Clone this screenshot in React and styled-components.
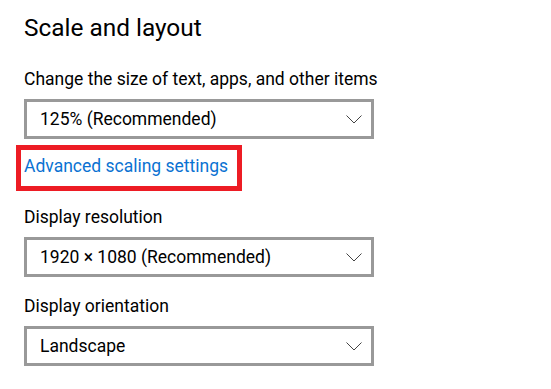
import React from "react";
import styled, { createGlobalStyle } from "styled-components";

const Global = createGlobalStyle`
  html, body { margin: 0; padding: 0; background: #ffffff; }
  body { font-family: Roboto, "Noto Sans", sans-serif; color: #000; }
`;

const Page = styled.div`
  display: flex;
  flex-direction: column;
  align-items: flex-start;
  padding: 11px 0 0 24px;
`;

const Title = styled.h1`
  margin: 0 0 22px;
  font-size: 24.4px;
  line-height: 34px;
  font-weight: 400;
`;

const Label = styled.div`
  font-size: 17.5px;
  line-height: 24px;
  white-space: nowrap;
  margin-top: ${(p) => p.$mt || 0}px;
`;

const Select = styled.div`
  box-sizing: border-box;
  width: 350px;
  height: 40px;
  margin-top: 8px;
  border: 3px solid #999999;
  display: flex;
  align-items: center;
  justify-content: space-between;
  padding: 0 9px 0 13px;
  font-size: 17.5px;
  white-space: nowrap;
`;

const Highlight = styled.div`
  box-sizing: border-box;
  width: 226px;
  margin: 6px 0 0 -8px;
  border: 5px solid #ed1c24;
  padding: 4px 0 8px 3px;
  white-space: nowrap;
`;

const Link = styled.a`
  font-size: 17.5px;
  line-height: 24px;
  color: #0a72d2;
  text-decoration: none;
`;

const Chevron = () => (
  <svg width="16" height="9" viewBox="0 0 16 9" fill="none">
    <path d="M0.5 0.5 L8 8 L15.5 0.5" stroke="#444" strokeWidth="1" />
  </svg>
);

const Dropdown = ({ value }) => (
  <Select>
    <span>{value}</span>
    <Chevron />
  </Select>
);

export default function App() {
  return (
    <>
      <Global />
      <Page>
        <Title>Scale and layout</Title>
        <Label>Change the size of text, apps, and other items</Label>
        <Dropdown value="125% (Recommended)" />
        <Highlight>
          <Link href="#">Advanced scaling settings</Link>
        </Highlight>
        <Label $mt={14}>Display resolution</Label>
        <Dropdown value="1920 × 1080 (Recommended)" />
        <Label $mt={17}>Display orientation</Label>
        <Dropdown value="Landscape" />
      </Page>
    </>
  );
}
